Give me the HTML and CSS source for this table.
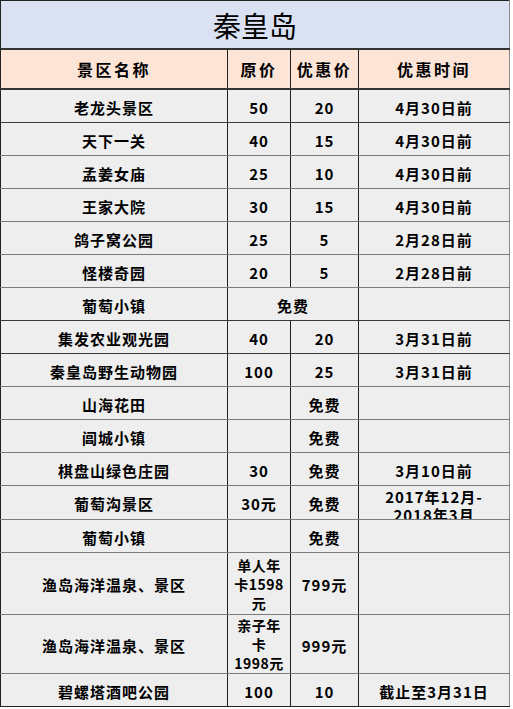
FILE: index.html
```html
<!DOCTYPE html>
<html lang="zh-CN">
<head>
<meta charset="utf-8">
<title>秦皇岛</title>
<link rel="stylesheet" href="styles.css">
</head>
<body>
<table class="sheet">
  <colgroup>
    <col class="c-name">
    <col class="c-orig">
    <col class="c-disc">
    <col class="c-time">
  </colgroup>
  <thead>
    <tr class="r-title"><th colspan="4" class="title">秦皇岛</th></tr>
    <tr class="r-head">
      <th>景区名称</th><th>原价</th><th>优惠价</th><th>优惠时间</th>
    </tr>
  </thead>
  <tbody>
    <tr class="r dk"><td>老龙头景区</td><td>50</td><td>20</td><td>4月30日前</td></tr>
    <tr class="r"><td>天下一关</td><td>40</td><td>15</td><td>4月30日前</td></tr>
    <tr class="r"><td>孟姜女庙</td><td>25</td><td>10</td><td>4月30日前</td></tr>
    <tr class="r"><td>王家大院</td><td>30</td><td>15</td><td>4月30日前</td></tr>
    <tr class="r"><td>鸽子窝公园</td><td>25</td><td>5</td><td>2月28日前</td></tr>
    <tr class="r"><td>怪楼奇园</td><td>20</td><td>5</td><td>2月28日前</td></tr>
    <tr class="r dk"><td>葡萄小镇</td><td colspan="2">免费</td><td></td></tr>
    <tr class="r dk"><td>集发农业观光园</td><td>40</td><td>20</td><td>3月31日前</td></tr>
    <tr class="r"><td>秦皇岛野生动物园</td><td>100</td><td>25</td><td>3月31日前</td></tr>
    <tr class="r"><td>山海花田</td><td></td><td>免费</td><td></td></tr>
    <tr class="r"><td>阊城小镇</td><td></td><td>免费</td><td></td></tr>
    <tr class="r"><td>棋盘山绿色庄园</td><td>30</td><td>免费</td><td>3月10日前</td></tr>
    <tr class="r"><td>葡萄沟景区</td><td>30元</td><td>免费</td><td class="clip-cell"><div class="clip">2017年12月-<br>2018年3月</div></td></tr>
    <tr class="r"><td>葡萄小镇</td><td></td><td>免费</td><td></td></tr>
    <tr class="r-tall1"><td>渔岛海洋温泉、景区</td><td class="wrap">单人年<br>卡1598<br>元</td><td>799元</td><td></td></tr>
    <tr class="r-tall2"><td>渔岛海洋温泉、景区</td><td class="wrap">亲子年<br>卡<br>1998元</td><td>999元</td><td></td></tr>
    <tr class="r last"><td>碧螺塔酒吧公园</td><td>100</td><td>10</td><td>截止至3月31日</td></tr>
  </tbody>
</table>
</body>
</html>
```
FILE: styles.css
```css
html, body {
  margin: 0;
  padding: 0;
  background: #ffffff;
}

.sheet {
  border-collapse: collapse;
  table-layout: fixed;
  width: 509px;
  font-family: "Noto Sans CJK SC", "Noto Sans", sans-serif;
  color: #000;
  border-left: 1px solid #222;
  border-top: 1px solid #222;
  border-right: 1px solid #8a8a8a;
}

.c-name { width: 227px; }
.c-orig { width: 63px; }
.c-disc { width: 68px; }
.c-time { width: 151px; }

.sheet th,
.sheet td {
  padding: 0;
  text-align: center;
  vertical-align: middle;
  overflow: hidden;
  white-space: nowrap;
}

.title {
  height: 47px;
  background: #d9e1f2;
  font-size: 28px;
  font-weight: 400;
  line-height: 30px;
  padding-top: 4px;
  border-bottom: 2px solid #333;
}

.r-head th {
  height: 38px;
  background: #fce4d6;
  font-size: 16px;
  font-weight: 700;
  letter-spacing: 2.5px;
  border-bottom: 2px solid #333;
  border-left: 1px solid #222;
}

.r-head th:first-child {
  border-left: none;
}

.sheet td {
  background: #eeeeee;
  font-size: 15px;
  font-weight: 700;
  letter-spacing: 1px;
  line-height: 18px;
  border-left: 1px solid #222;
  border-bottom: 1px solid #7a7a7a;
  padding-top: 3px;
}

.sheet td:first-child {
  border-left: none;
}

.r td { height: 29px; }
.r.dk td { border-bottom-color: #3a3a3a; }
.r.last td { border-bottom: 1px solid #222; }

.r-tall1 td { height: 58px; }
.r-tall2 td { height: 52px; }

.sheet td.wrap {
  white-space: normal;
  font-size: 14px;
  line-height: 19px;
  letter-spacing: 0.5px;
  padding-top: 1px;
}

.sheet td.clip-cell {
  padding-top: 0;
  vertical-align: top;
}

.clip {
  height: 33px;
  overflow: hidden;
  padding-top: 2px;
  box-sizing: border-box;
  line-height: 18px;
}
```
